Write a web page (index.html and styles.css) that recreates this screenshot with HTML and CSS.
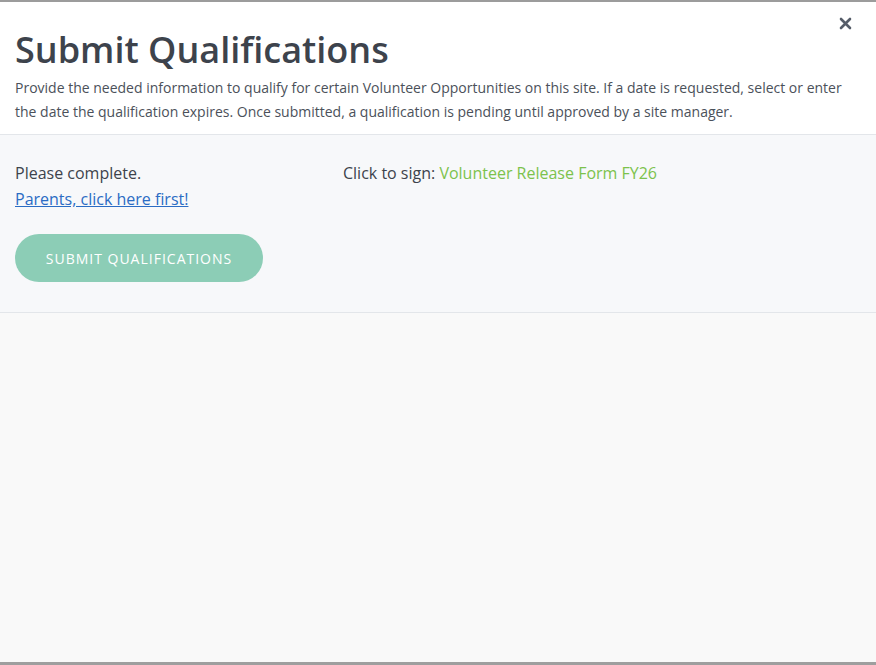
FILE: index.html
```html
<!DOCTYPE html>
<html>
<head>
<meta charset="utf-8">
<link rel="stylesheet" href="styles.css">
</head>
<body>
<div class="modal">
  <header class="modal-header">
    <button class="close" aria-label="Close">
      <svg width="13" height="13" viewBox="0 0 13 13"><path d="M2 2 L11 11 M11 2 L2 11" stroke="#555c68" stroke-width="2.6" stroke-linecap="round"/></svg>
    </button>
    <h1 class="title">Submit Qualifications</h1>
    <p class="desc">Provide the needed information to qualify for certain Volunteer Opportunities on this site. If a date is requested, select or enter the date the qualification expires. Once submitted, a qualification is pending until approved by a site manager.</p>
  </header>
  <section class="modal-body">
    <div class="cols">
      <div class="col-left">
        <div class="line">Please complete.</div>
        <a class="parents" href="#">Parents, click here first!</a>
      </div>
      <div class="col-right">
        <div class="line">Click to sign: <a class="sign" href="#">Volunteer Release Form FY26</a></div>
      </div>
    </div>
    <button class="submit">Submit Qualifications</button>
  </section>
  <div class="rest"></div>
  <div class="bottom-strip"></div>
</div>
</body>
</html>
```

FILE: styles.css
```css
html, body {
  margin: 0;
  padding: 0;
  height: 100%;
}
body {
  font-family: "Open Sans", "Liberation Sans", sans-serif;
  color: #3d434c;
  background: #f9f9f9;
}
.modal {
  display: flex;
  flex-direction: column;
  height: 665px;
  border-top: 2px solid #9c9c9c;
  box-sizing: border-box;
}
.modal-header {
  position: relative;
  background: #ffffff;
  padding: 26px 15px 10px 15px;
  border-bottom: 1px solid #e3e6ea;
}
.close {
  position: absolute;
  top: 13px;
  right: 22px;
  background: none;
  border: 0;
  padding: 2px;
  cursor: pointer;
  line-height: 0;
}
.title {
  margin: 0;
  font-size: 36px;
  font-weight: 600;
  line-height: 44px;
  color: #3d434c;
}
.desc {
  margin: 4px 0 0 0;
  font-size: 14px;
  line-height: 24px;
  color: #4b515a;
}
.modal-body {
  background: #f7f8fa;
  padding: 25px 15px 30px 15px;
  border-bottom: 1px solid #e3e6ea;
}
.cols {
  display: flex;
}
.col-left {
  width: 328px;
  display: flex;
  flex-direction: column;
}
.line {
  font-size: 16px;
  line-height: 26px;
  color: #3d434c;
}
.parents {
  font-size: 16px;
  line-height: 26px;
  color: #2b6cc4;
  text-decoration: underline;
}
.sign {
  color: #7cc24c;
  text-decoration: none;
}
.submit {
  margin-top: 22px;
  width: 248px;
  height: 48px;
  border: 0;
  border-radius: 24px;
  background: #8ccdb6;
  color: #ffffff;
  font-family: "Open Sans", "Liberation Sans", sans-serif;
  font-size: 14px;
  letter-spacing: 1px;
  text-transform: uppercase;
  cursor: pointer;
}
.rest {
  flex: 1;
  background: #f9f9f9;
}
.bottom-strip {
  height: 3px;
  background: #9e9e9e;
}
```
